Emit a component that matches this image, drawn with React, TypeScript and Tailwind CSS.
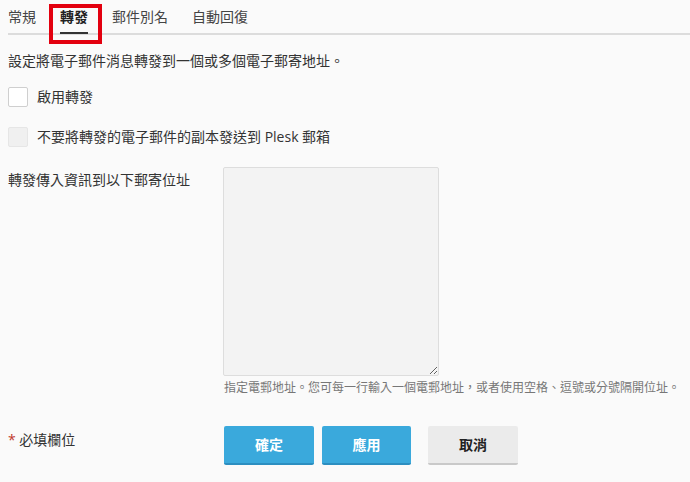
const font = {
  fontFamily: '"Open Sans", "Noto Sans CJK TC", sans-serif',
};

const Tab = ({ label, active }: { label: string; active?: boolean }) => (
  <div className="relative flex h-[33px] items-center">
    <span
      className={
        active
          ? "text-[14px] font-bold text-[#222]"
          : "text-[14px] text-[#444]"
      }
    >
      {label}
    </span>
    {active && (
      <>
        <div className="absolute bottom-[-1px] left-0 right-0 h-[2px] bg-[#333]" />
        <div className="absolute left-[-11px] right-[-14px] top-[4px] h-[40px] border-4 border-[#e3000f]" />
      </>
    )}
  </div>
);

const Checkbox = ({ disabled }: { disabled?: boolean }) => (
  <div
    className={
      disabled
        ? "size-[20px] rounded-[2px] border border-[#e6e6e6] bg-[#f0f0f0]"
        : "size-[20px] rounded-[2px] border border-[#cfcfcf] bg-white"
    }
  />
);

export default function App() {
  return (
    <div
      className="h-[482px] w-[690px] overflow-hidden bg-[#fafafa] text-[#333]"
      style={font}
    >
      <div className="ml-2 flex gap-[24px] border-b-2 border-[#dcdcdc]">
        <Tab label="常規" />
        <Tab label="轉發" active />
        <Tab label="郵件別名" />
        <Tab label="自動回復" />
      </div>

      <p className="mt-[16px] pl-2 text-[14px] leading-[20px]">
        設定將電子郵件消息轉發到一個或多個電子郵寄地址。
      </p>

      <div className="mt-[16px] flex items-center gap-[9px] pl-2">
        <Checkbox />
        <span className="text-[14px] leading-[20px]">啟用轉發</span>
      </div>

      <div className="mt-[20px] flex items-center gap-[9px] pl-2">
        <Checkbox disabled />
        <span className="text-[14px] leading-[20px]">
          不要將轉發的電子郵件的副本發送到 Plesk 郵箱
        </span>
      </div>

      <div className="mt-[20px] flex pl-2">
        <div className="w-[215px] pt-[3px] text-[14px] leading-[20px]">
          轉發傳入資訊到以下郵寄位址
        </div>
        <div className="flex flex-col">
          <textarea className="h-[209px] w-[216px] resize rounded-[2px] border border-[#dddddd] bg-[#f3f3f3]" />
          <p className="mt-[3px] pl-[1px] text-[12px] leading-[18px] text-[#777]">
            指定電郵地址。您可每一行輸入一個電郵地址，或者使用空格、逗號或分號隔開位址。
          </p>
        </div>
      </div>

      <div className="mt-[29px] flex items-start pl-2">
        <div className="w-[216px] pt-[4px] text-[14px] leading-[20px]">
          <span className="text-[#c0392b]">*</span> 必填欄位
        </div>
        <div className="flex gap-[8px]">
          <button className="h-[39px] w-[90px] rounded-[2px] border-b-2 border-[#2c8ec0] bg-[#3aa9dc] text-[14px] font-bold text-white">
            確定
          </button>
          <button className="h-[39px] w-[89px] rounded-[2px] border-b-2 border-[#2c8ec0] bg-[#3aa9dc] text-[14px] font-bold text-white">
            應用
          </button>
          <button className="ml-[9px] h-[39px] w-[90px] rounded-[2px] border-b-2 border-[#c9c9c9] bg-[#ebebeb] text-[14px] font-bold text-[#222]">
            取消
          </button>
        </div>
      </div>
    </div>
  );
}
